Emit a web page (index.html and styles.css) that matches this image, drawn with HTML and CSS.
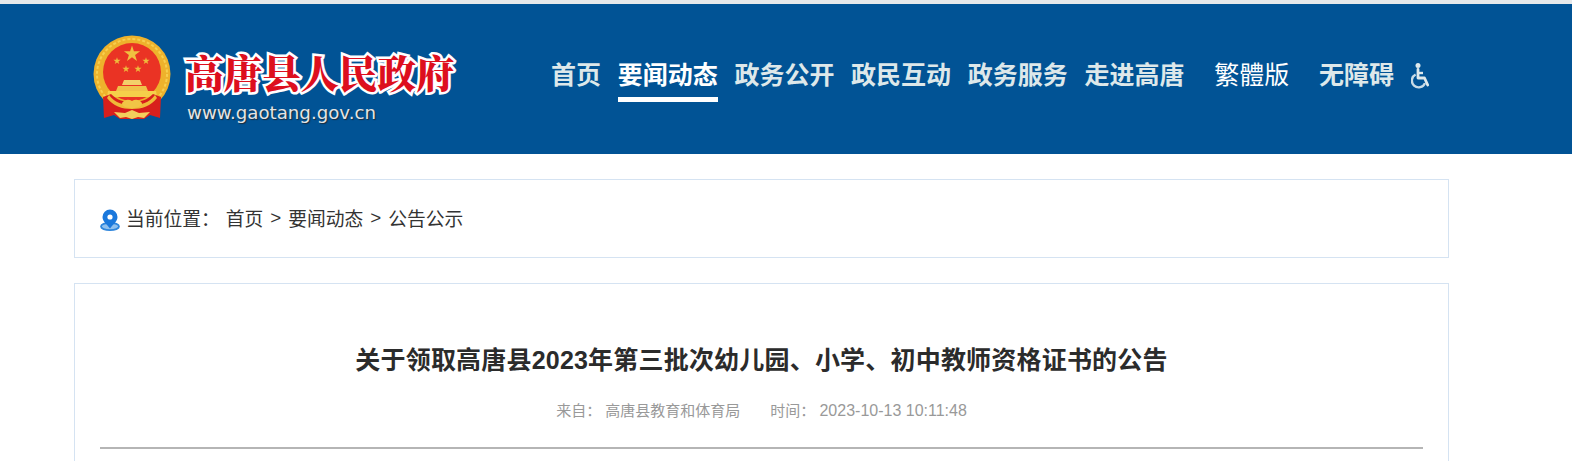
FILE: index.html
```html
<!DOCTYPE html>
<html lang="zh-CN">
<head>
    <meta charset="UTF-8">
    <meta name="viewport" content="width=device-width, initial-scale=1.0">
    <title>关于领取高唐县2023年第三批次幼儿园、小学、初中教师资格证书的公告</title>
    <link rel="stylesheet" href="styles.css">
</head>
<body>
    <header class="header">
        <div class="logo">
            <svg class="emblem" viewBox="0 0 90 100" aria-hidden="true">
                <defs>
                    <polygon id="star" points="0,-10 2.25,-3.09 9.51,-3.09 3.63,1.18 5.88,8.09 0,3.82 -5.88,8.09 -3.63,1.18 -9.51,-3.09 -2.25,-3.09"/>
                </defs>
                <circle cx="47" cy="44" r="38.5" fill="#eeb22c"/>
                <circle cx="47" cy="44" r="35" fill="none" stroke="#f7cf4e" stroke-width="2" stroke-dasharray="3 2"/>
                <circle cx="47" cy="42" r="29" fill="#ea3324"/>
                <use href="#star" fill="#f0c040" transform="translate(47 24) scale(.85)"/>
                <use href="#star" fill="#eebb3c" transform="translate(32 31) scale(.38)"/>
                <use href="#star" fill="#eebb3c" transform="translate(61 31) scale(.38)"/>
                <use href="#star" fill="#eebb3c" transform="translate(41 39) scale(.38)"/>
                <use href="#star" fill="#eebb3c" transform="translate(53 39) scale(.38)"/>
                <path d="M39 50h16l2 5H37z" fill="#f3d06a"/>
                <path d="M33 56h28l2 5H31z" fill="#f0c24a"/>
                <path d="M23 61h48l1 6H22z" fill="#f5cf4a"/>
                <path d="M18 67l8-3c6 6 12 8 21 8s15-2 21-8l8 3-1 21-10-3-6 4H35l-6-4-10 3z" fill="#d81f1c"/>
                <path d="M24 65c6 8 14 10 23 10s17-2 23-10l2 3c-6 8-15 11-25 11S28 76 22 68z" fill="#efba38"/>
                <path d="M37 73c3-4 7-4 10-2 3-2 7-2 10 2 0 4-5 5-10 5s-10-1-10-5z" fill="#f1c546"/>
                <path d="M29 82l11 1 7-3 7 3 11-1-6 6-6-1-6 2-6-2-6 1z" fill="#f3cf5c"/>
            </svg>
            <div class="logo-text">
                <div class="logo-name">高唐县人民政府</div>
                <div class="logo-url">www.gaotang.gov.cn</div>
            </div>
        </div>
        <nav class="nav">
            <a class="nav-item" href="#">首页</a>
            <a class="nav-item active" href="#">要闻动态</a>
            <a class="nav-item" href="#">政务公开</a>
            <a class="nav-item" href="#">政民互动</a>
            <a class="nav-item" href="#">政务服务</a>
            <a class="nav-item" href="#">走进高唐</a>
            <a class="nav-item lang" href="#">繁體版</a>
            <a class="nav-item access" href="#">无障碍</a>
            <svg class="wheelchair" viewBox="0 0 20 26" aria-hidden="true">
                <circle cx="7" cy="2.6" r="2.5" fill="#dfe9ec"/>
                <path d="M7 6.500v8.500h6.500l3.200 7" fill="none" stroke="#dfe9ec" stroke-width="2.800" stroke-linecap="round" stroke-linejoin="round"/>
                <path d="M7 10h5" fill="none" stroke="#dfe9ec" stroke-width="2.400"/>
                <path d="M4.600 11.500a6.800 6.800 0 1 0 9.400 8.600" fill="none" stroke="#c8dbe6" stroke-width="2.400"/>
            </svg>
        </nav>
    </header>

    <main class="main">
        <div class="crumb">
            <svg class="pin" viewBox="0 0 20 22" aria-hidden="true">
                <ellipse cx="10" cy="17.5" rx="9" ry="3.600" fill="#8fc0ee" stroke="#2f86dc" stroke-width="1.800"/>
                <path d="M10 0.5a7.500 7.500 0 0 0-7.500 7.500c0 4.500 5 8 7.500 11.500 2.500-3.500 7.500-7 7.500-11.500a7.500 7.500 0 0 0-7.500-7.500z" fill="#1a78dc"/>
                <circle cx="10" cy="8" r="2.600" fill="#fff"/>
            </svg>
            <span class="crumb-label">当前位置：</span>
            <a href="#">首页</a>
            <span class="sep">&gt;</span>
            <a href="#">要闻动态</a>
            <span class="sep">&gt;</span>
            <a href="#">公告公示</a>
        </div>

        <article class="article">
            <h1 class="article-title">关于领取高唐县2023年第三批次幼儿园、小学、初中教师资格证书的公告</h1>
            <div class="article-meta">
                <span>来自：&nbsp;高唐县教育和体育局</span>
                <span>时间：&nbsp;<span class="meta-date">2023-10-13 10:11:48</span></span>
            </div>
        </article>
    </main>
</body>
</html>
```

FILE: styles.css
```css
* {
    margin: 0;
    padding: 0;
    box-sizing: border-box;
}

html,
body {
    height: 100%;
    overflow: hidden;
}

body {
    font-family: "Liberation Sans", "Noto Sans CJK SC", sans-serif;
    background: #fff;
    color: #333;
    display: flex;
    flex-direction: column;
}

a {
    color: inherit;
    text-decoration: none;
}

.header {
    height: 154px;
    flex-shrink: 0;
    border-top: 4px solid #e6e8ea;
    background: #015395;
    display: flex;
    align-items: flex-start;
    padding-left: 93px;
}

.logo {
    display: flex;
    width: 458px;
    padding-top: 32px;
}

.emblem {
    width: 90px;
    height: 100px;
    margin-left: -8px;
    margin-top: -6px;
    flex-shrink: 0;
}

.logo-text {
    margin-left: 10px;
    padding-top: 13px;
}

.logo-name {
    font-family: "Noto Serif CJK SC", "Noto Sans CJK SC", serif;
    font-size: 38.5px;
    line-height: 46px;
    font-weight: 900;
    color: #dd0f1e;
    white-space: nowrap;
    -webkit-text-stroke: 5px #fff;
    paint-order: stroke fill;
}

.logo-url {
    font-family: "DejaVu Sans", sans-serif;
    font-size: 18.2px;
    line-height: 22px;
    margin-top: 7px;
    margin-left: 2px;
    color: #e4e4e4;
    text-shadow: 1px 1px 1px #1c2b3a;
    white-space: nowrap;
}

.nav {
    display: flex;
    align-items: flex-start;
    gap: 16.7px;
    padding-top: 51px;
}

.nav-item {
    font-family: "Noto Sans CJK SC", sans-serif;
    font-size: 25px;
    line-height: 36px;
    font-weight: 700;
    color: #dde8ea;
    white-space: nowrap;
    height: 47px;
    border-bottom: 5px solid transparent;
}

.nav-item.active {
    color: #fff;
    border-bottom-color: #fff;
}

.nav-item.lang {
    font-weight: 400;
    color: #fff;
    margin-left: 13px;
}

.nav-item.access {
    margin-left: 13px;
}

.wheelchair {
    width: 20px;
    height: 26px;
    margin-top: 8px;
}

.main {
    flex: 1;
    min-height: 0;
    display: flex;
    flex-direction: column;
    width: 1375px;
    margin-left: 74px;
    padding-top: 25px;
}

.crumb {
    height: 79px;
    flex-shrink: 0;
    border: 1px solid #d5e3f2;
    padding-left: 25px;
    padding-bottom: 2px;
    display: flex;
    align-items: center;
    font-size: 18.75px;
    color: #333;
    white-space: nowrap;
}

.pin {
    width: 20px;
    height: 22px;
    margin-top: 5px;
    margin-right: 6px;
}

.crumb-label {
    margin-right: 6px;
}

.crumb .sep {
    margin: 0 7px;
}

.article {
    flex: 1;
    min-height: 0;
    margin-top: 25px;
    border: 1px solid #d5e3f2;
    border-bottom: 0;
    padding: 0 25px;
}

.article-title {
    font-size: 25px;
    line-height: 36px;
    font-weight: 700;
    letter-spacing: 0.2px;
    color: #2b2b2b;
    text-align: center;
    padding-top: 58px;
    box-sizing: content-box;
}

.article-meta {
    display: flex;
    justify-content: center;
    gap: 30px;
    margin-top: 21px;
    padding-bottom: 24px;
    border-bottom: 2px solid #b5b5b5;
    font-size: 15px;
    line-height: 24px;
    color: #999;
}

.meta-date {
    font-size: 16px;
}
```
